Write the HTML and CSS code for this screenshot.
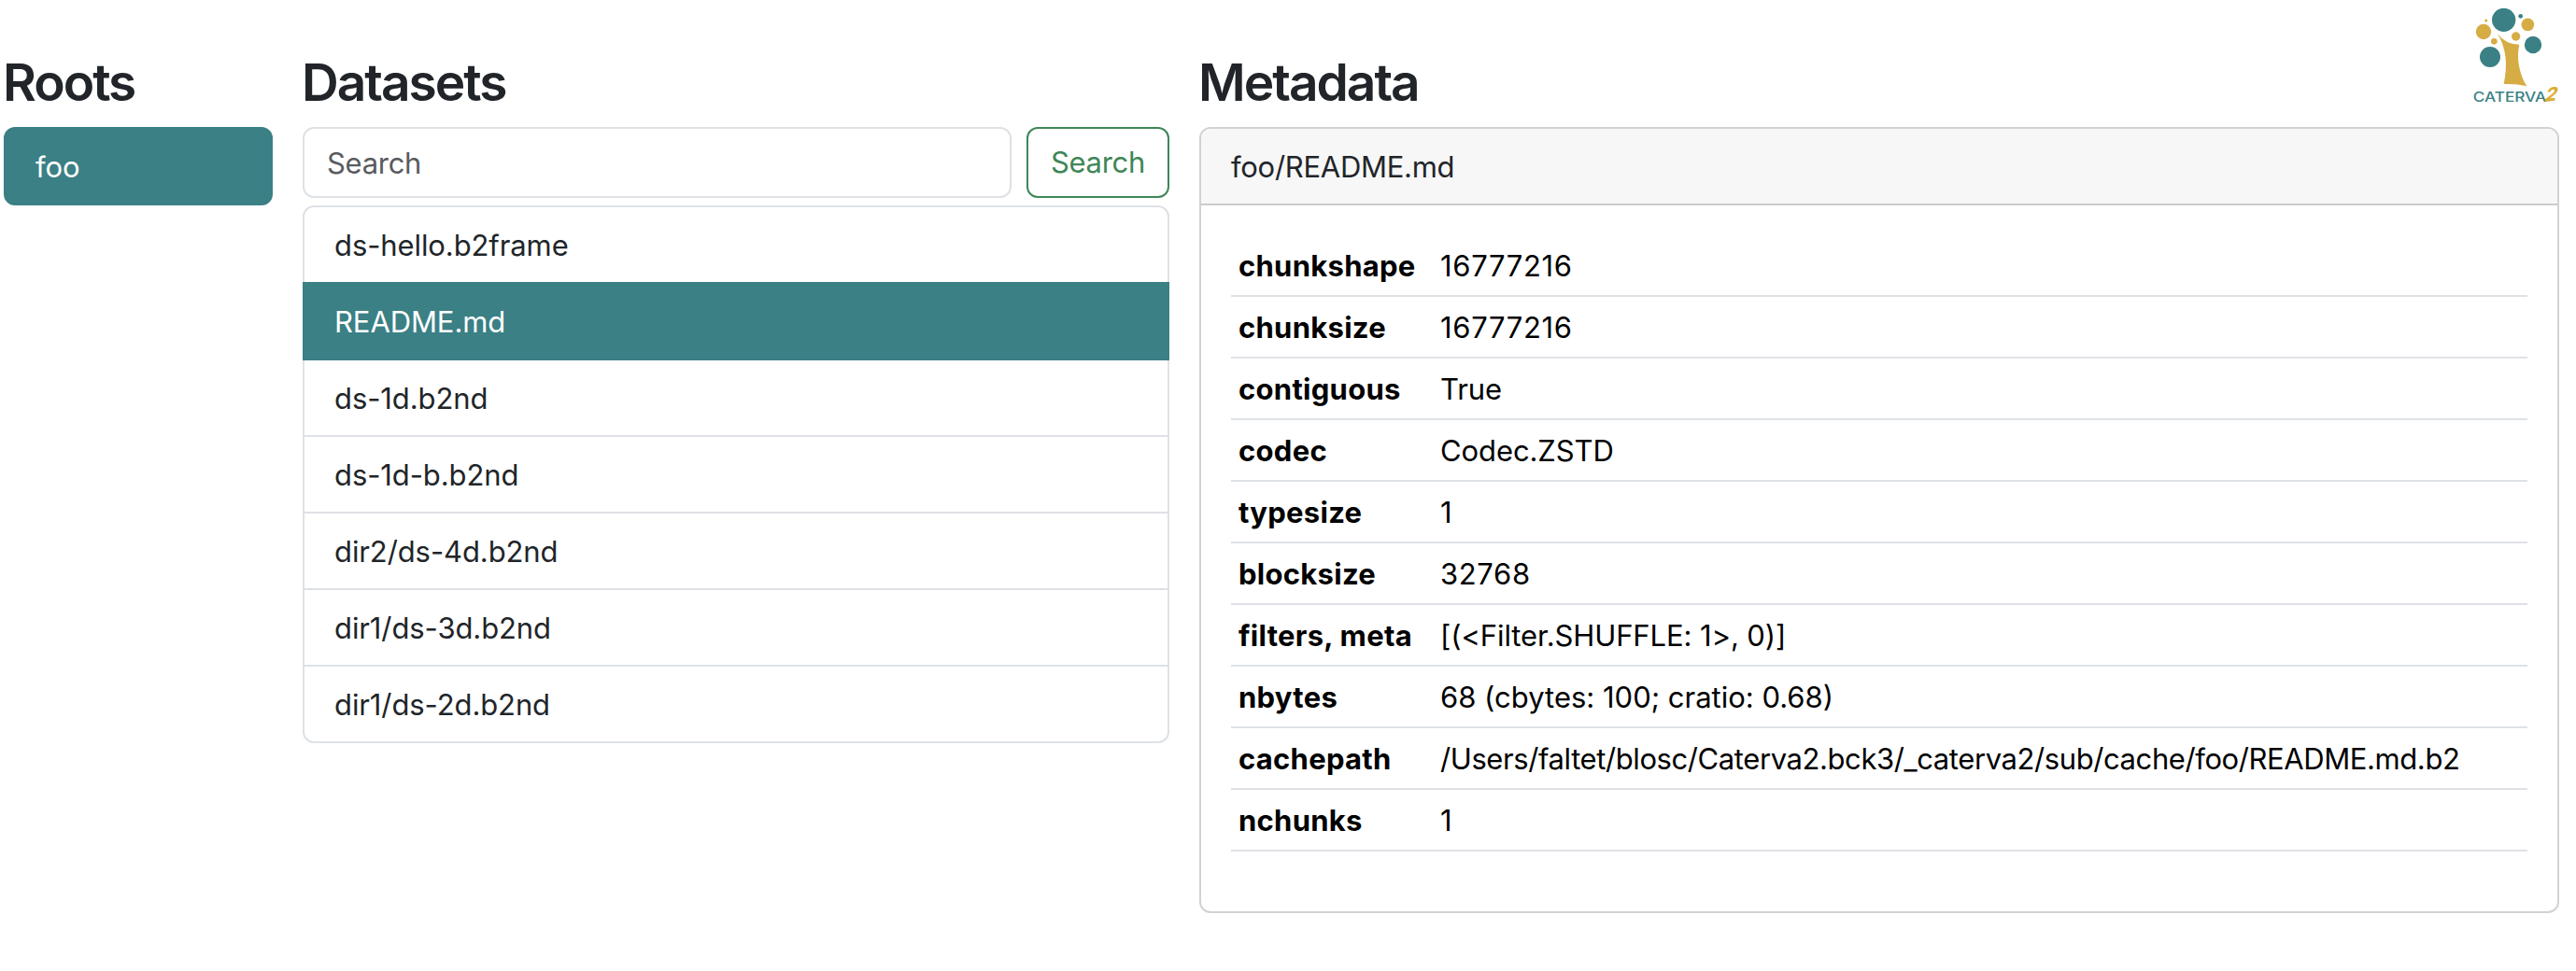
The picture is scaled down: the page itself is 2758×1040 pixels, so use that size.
FILE: index.html
```
<!DOCTYPE html>
<html lang="en">
<head>
<meta charset="utf-8">
<title>Caterva2</title>
<link rel="stylesheet" href="styles.css">
</head>
<body>
<svg class="logo" viewBox="0 0 360 360" role="img" aria-label="Caterva2">
  <g class="logo-teal">
    <circle cx="128" cy="64" r="38"/>
    <circle cx="182" cy="52" r="7"/>
    <circle cx="222" cy="144" r="27.5"/>
    <circle cx="84" cy="183" r="33"/>
  </g>
  <g class="logo-gold">
    <circle cx="205" cy="79" r="20.5"/>
    <circle cx="63" cy="102" r="24.5"/>
    <circle cx="71" cy="66" r="4.5"/>
    <circle cx="97" cy="133" r="10"/>
    <circle cx="167" cy="117" r="14"/>
    <path d="M107 107Q134 143 178 143C168 185 177 236 202 277Q165 268 128 270C141 208 137 155 107 107Z"/>
  </g>
  <text class="logo-name" x="29" y="326" textLength="236" lengthAdjust="spacingAndGlyphs">CATERVA</text>
  <text class="logo-two" transform="translate(256 327) rotate(-6) skewX(-24)" x="0" y="0">2</text>
</svg>
<main class="columns">
  <section class="roots">
    <h2>Roots</h2>
    <div class="list">
      <a class="item active">foo</a>
    </div>
  </section>
  <section class="datasets">
    <h2>Datasets</h2>
    <form class="search">
      <input type="search" placeholder="Search" aria-label="Search">
      <button type="button">Search</button>
    </form>
    <div class="list">
      <a class="item">ds-hello.b2frame</a>
      <a class="item active">README.md</a>
      <a class="item">ds-1d.b2nd</a>
      <a class="item">ds-1d-b.b2nd</a>
      <a class="item">dir2/ds-4d.b2nd</a>
      <a class="item">dir1/ds-3d.b2nd</a>
      <a class="item">dir1/ds-2d.b2nd</a>
    </div>
  </section>
  <section class="metadata">
    <h2>Metadata</h2>
    <div class="card">
      <div class="card-header">foo/README.md</div>
      <div class="card-body">
        <table>
          <tr><th>chunkshape</th><td class="number">16777216</td></tr>
          <tr><th>chunksize</th><td class="number">16777216</td></tr>
          <tr><th>contiguous</th><td>True</td></tr>
          <tr><th>codec</th><td>Codec.ZSTD</td></tr>
          <tr><th>typesize</th><td class="number">1</td></tr>
          <tr><th>blocksize</th><td class="number">32768</td></tr>
          <tr><th>filters, meta</th><td>[(&lt;Filter.SHUFFLE: 1&gt;, 0)]</td></tr>
          <tr><th>nbytes</th><td class="sizes">68 (cbytes: 100; cratio: 0.68)</td></tr>
          <tr><th>cachepath</th><td class="path">/Users/faltet/blosc/Caterva2.bck3/_caterva2/sub/cache/foo/README.md.b2</td></tr>
          <tr><th>nchunks</th><td class="number">1</td></tr>
        </table>
      </div>
    </div>
  </section>
</main>
</body>
</html>
```

FILE: styles.css
```
* {
  box-sizing: border-box;
}

body {
  margin: 0;
  background: #fff;
  color: #212529;
  font: 400 31px/48px Inter, "Liberation Sans", sans-serif;
  letter-spacing: -0.1px;
}

.logo {
  position: absolute;
  top: 0;
  left: 2638px;
  width: 120px;
  height: 120px;
}

.logo-teal {
  fill: #3a8085;
}

.logo-gold {
  fill: #d6ac44;
}

.logo-name {
  fill: #3a8085;
  font: 500 43px Inter, sans-serif;
  letter-spacing: 0;
}

.logo-two {
  fill: #dcae35;
  font: 800 60px Inter, sans-serif;
  letter-spacing: 0;
}

.columns {
  display: grid;
  grid-template-columns: 288px 928px 1456px;
  gap: 32px;
  align-items: start;
  padding: 54px 0 0 4px;
}

h2 {
  margin: 0 0 14px -1px;
  font-size: 55px;
  font-weight: 600;
  line-height: 68px;
  letter-spacing: -2px;
}

.list {
  display: flex;
  flex-direction: column;
}

.item {
  padding: 17px 32px 15px;
  border: 2px solid #dee2e6;
  border-top-width: 0;
}

.item:first-child {
  border-top-width: 2px;
  border-radius: 12px 12px 0 0;
}

.item:last-child {
  border-radius: 0 0 12px 12px;
}

.item:only-child {
  border-radius: 12px;
}

.item.active {
  border-color: #3a8085;
  background: #3a8085;
  color: #fff;
}

.item + .item.active {
  margin-top: -2px;
  border-top-width: 2px;
}

.search {
  display: flex;
  gap: 16px;
  margin-bottom: 8px;
}

.search input,
.search button {
  height: 76px;
  padding: 12px 24px;
  border: 2px solid #dee2e6;
  border-radius: 12px;
  background: #fff;
  font: inherit;
  letter-spacing: -0.3px;
}

.search input {
  flex: 1;
  min-width: 0;
  appearance: none;
}

.search input::placeholder {
  color: #595c5f;
  opacity: 1;
}

.search button {
  width: 153px;
  padding: 12px 0;
  border-color: #3f8657;
  color: #3f8657;
}

.card {
  border: 2px solid #d2d2d2;
  border-radius: 12px;
  overflow: hidden;
}

.card-header {
  padding: 17px 32px 15px;
  border-bottom: 2px solid #cbcbcb;
  background: #f7f7f7;
  letter-spacing: -0.28px;
}

.card-body {
  padding: 32px 32px 64px;
}

table {
  width: 100%;
  border-collapse: separate;
  border-spacing: 0;
  color: #000;
}

th,
td {
  padding: 9px 8px 7px;
  border-bottom: 2px solid #dee2e6;
  text-align: left;
}

th {
  width: 216px;
  font-weight: 700;
  letter-spacing: 0.28px;
  white-space: nowrap;
}

.number {
  letter-spacing: 0.65px;
}

.sizes {
  letter-spacing: 0;
}

.path {
  letter-spacing: -0.41px;
}
```
